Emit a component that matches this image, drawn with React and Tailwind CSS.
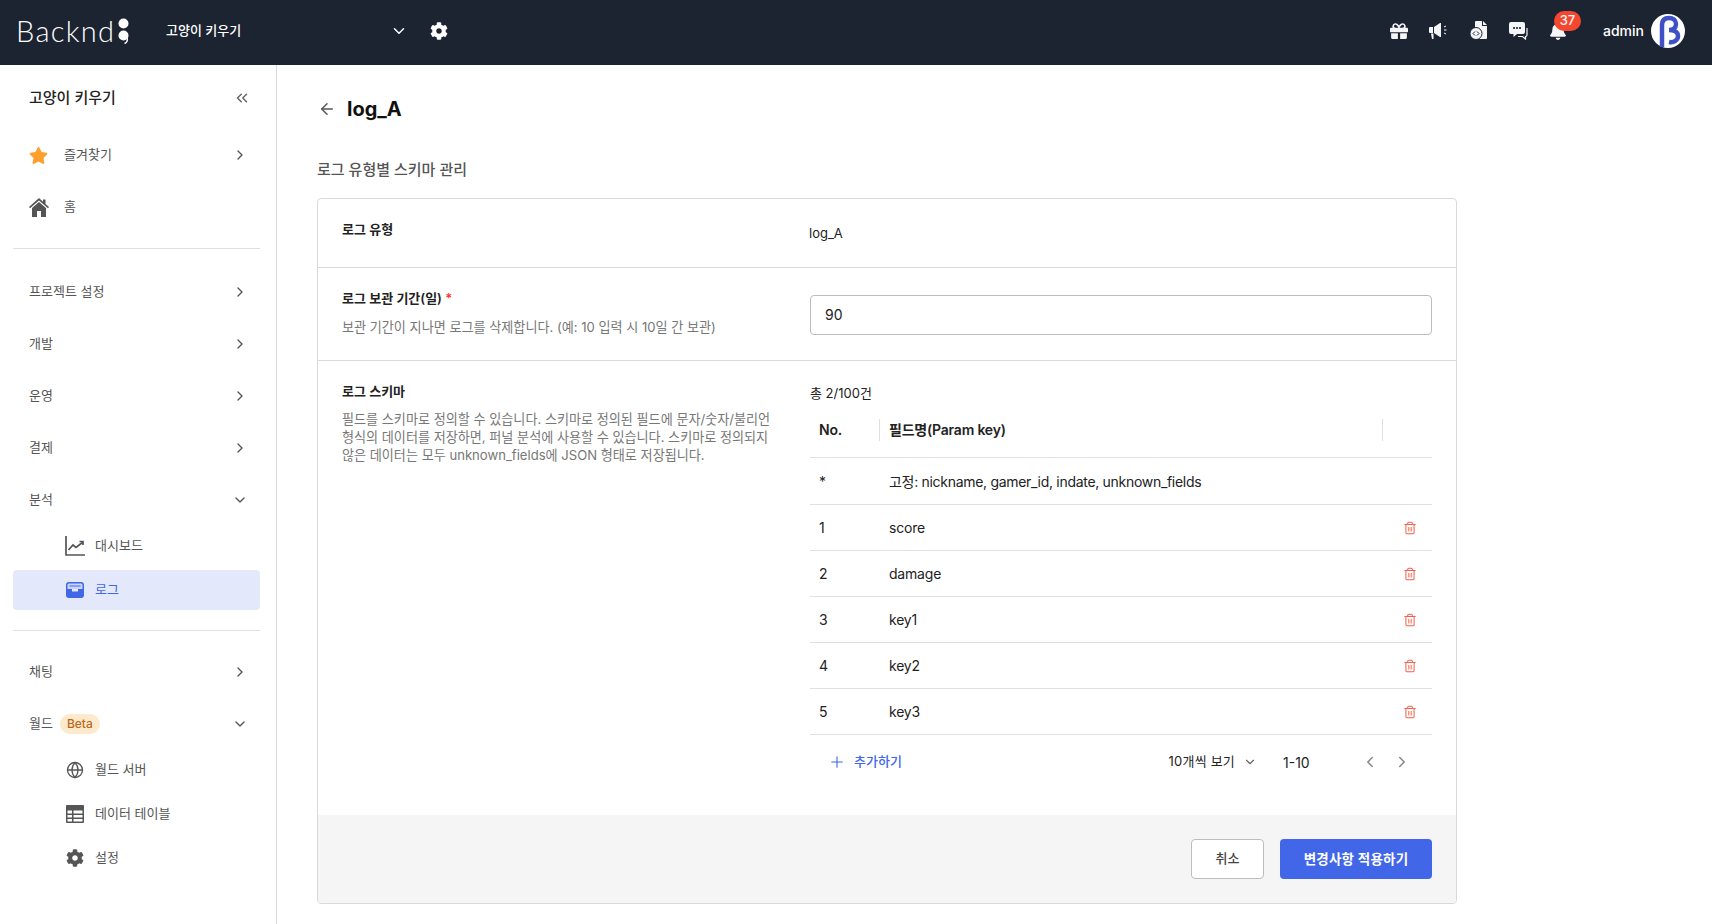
import { ChevronDown, ChevronRight, ChevronLeft, ChevronsLeft, ArrowLeft, Plus, Trash2, Globe } from 'lucide-react';
import { FaStar, FaGift, FaBell, FaCog } from 'react-icons/fa';

const font = { fontFamily: 'Inter, "Noto Sans CJK KR", sans-serif' };

function NavItem({ label, open, icon, badge, noArrow }) {
  return (
    <div className="h-[52px] flex items-center pl-[29px] pr-[28px] text-[13px] text-[#555]">
      {icon && <span className="w-[35px] flex items-center">{icon}</span>}
      <span className="pb-px">{label}</span>
      {badge && (
        <span className="ml-[7px] px-[7px] h-5 flex items-center rounded-full bg-[#fde9cc] text-[#b8691d] text-[12px] font-medium">{badge}</span>
      )}
      {!noArrow && (
        <span className="ml-auto">
          {open ? <ChevronDown className="w-4 h-4 text-[#555]" /> : <ChevronRight className="w-4 h-4 text-[#555]" />}
        </span>
      )}
    </div>
  );
}

function SubItem({ label, icon, active }) {
  return (
    <div className={`h-10 flex items-center ml-[13px] mr-4 pl-[52px] gap-[10px] text-[13px] rounded ${active ? 'bg-[#e3e9fb] text-[#4166e8]' : 'text-[#555]'}`}>
      <span className="w-5 flex justify-center">{icon}</span>
      <span className="pb-px">{label}</span>
    </div>
  );
}

function ChartIcon() {
  return (
    <svg width="20" height="20" viewBox="0 0 20 20" fill="none" stroke="#555" strokeWidth="1.7">
      <path d="M1 0v19h19" />
      <path d="M3.500 14l4.500-5 3 2.500L18 6" />
      <path d="M14.500 5.500H18V9" />
    </svg>
  );
}

function InboxIcon() {
  return (
    <svg width="18" height="16" viewBox="0 0 18 16">
      <path d="M3 0h12a3 3 0 0 1 3 3v10a3 3 0 0 1-3 3H3a3 3 0 0 1-3-3V3a3 3 0 0 1 3-3z" fill="#4166e8" />
      <path d="M3 1.500h12a1.500 1.500 0 0 1 1.500 1.500v4h-15V3A1.500 1.500 0 0 1 3 1.500z" fill="#c9d5fa" />
      <path d="M3.500 3.500h11v1h-11z" fill="#4166e8" />
      <path d="M6 7h6v2.500H6z" fill="#e3e9fb" />
    </svg>
  );
}

function HomeIcon() {
  return (
    <svg width="20" height="19" viewBox="0 0 20 19" fill="#555">
      <path d="M10 0L0 9l1 1.200L10 2.400l9 7.800 1-1.200-3.500-3.100V1.500h-2.500v2.200z" />
      <path d="M10 4L3 10v9h5v-6h4v6h5v-9z" />
    </svg>
  );
}

function TableIcon() {
  return (
    <svg width="18" height="18" viewBox="0 0 18 18">
      <path d="M0 1a1 1 0 0 1 1-1h16a1 1 0 0 1 1 1v16a1 1 0 0 1-1 1H1a1 1 0 0 1-1-1z" fill="#555" />
      <path d="M1.500 5.500h4.500v3h-4.500zM7.500 5.500h9v3h-9zM1.500 10h4.500v2.500h-4.500zM7.500 10h9v2.500h-9zM1.500 14h4.500v2.500h-4.500zM7.500 14h9v2.500h-9z" fill="#fff" />
    </svg>
  );
}

function MegaphoneIcon() {
  return (
    <svg width="20" height="18" viewBox="0 0 20 18" fill="#f4f5f7">
      <path d="M0 6a1 1 0 0 1 1-1h3v6H1a1 1 0 0 1-1-1z" />
      <path d="M5 5l6-4h1v14h-1l-6-4z" />
      <path d="M2 11.500h2.500V17H3z" />
      <path d="M15 5l2-1M15 8h2.500M15 11l2 1" stroke="#f4f5f7" strokeWidth="1" fill="none" />
    </svg>
  );
}

function FileCodeIcon() {
  return (
    <svg width="18" height="19" viewBox="0 0 18 19" fill="#f4f5f7">
      <path d="M5 1a1 1 0 0 1 1-1h6v5h5v12a1 1 0 0 1-1 1H6a1 1 0 0 1-1-1z" />
      <path d="M13 0l4 4h-4z" />
      <circle cx="6" cy="12.500" r="6" stroke="#1c2331" strokeWidth="1" />
      <path d="M5 10.500l-2 2 2 2M7 10.500l2 2-2 2" stroke="#1c2331" strokeWidth="1" fill="none" />
    </svg>
  );
}

function ChatIcon() {
  return (
    <svg width="19" height="18" viewBox="0 0 19 18" fill="#f4f5f7">
      <path d="M2 0h12a2 2 0 0 1 2 2v8a2 2 0 0 1-2 2H8l-3.500 3v-3H2a2 2 0 0 1-2-2V2a2 2 0 0 1 2-2z" />
      <circle cx="5" cy="6" r="1.100" fill="#1c2331" />
      <circle cx="8" cy="6" r="1.100" fill="#1c2331" />
      <circle cx="11" cy="6" r="1.100" fill="#1c2331" />
      <path d="M18 6v7a1.500 1.500 0 0 1-1.500 1.500V17l-3-2.500H9" fill="none" stroke="#f4f5f7" strokeWidth="1.200" />
    </svg>
  );
}

function Logo() {
  return (
    <div className="flex items-center w-[166px] pl-4">
      <span className="text-[29px] text-white tracking-[1.300px] leading-none" style={{ fontFamily: 'Lato, sans-serif', fontWeight: 300 }}>Backnd</span>
      <svg width="11" height="26" viewBox="0 0 11 26" className="ml-[3px]">
        <circle cx="5.500" cy="5.500" r="5" fill="#fff" />
        <circle cx="5.500" cy="17.500" r="5" fill="#fff" />
        <path d="M9 20c1 2.500-.5 5-2.500 5.500" stroke="#fff" strokeWidth="1.500" fill="none" />
      </svg>
    </div>
  );
}

function Avatar() {
  return (
    <svg width="34" height="34" viewBox="0 0 34 34">
      <circle cx="17" cy="17" r="17" fill="#fff" />
      <path d="M11 33V11c0-5 3-7 7-7s7 2 7 6-3 6-7 6c5 0 9 2 9 6s-4 7-9 6" fill="none" stroke="#3f51c4" strokeWidth="4.500" />
    </svg>
  );
}

const rows = ['score', 'damage', 'key1', 'key2', 'key3'];

export default function App() {
  return (
    <div className="h-screen overflow-hidden flex flex-col bg-white" style={font}>
      {/* Header */}
      <header className="h-[65px] shrink-0 bg-[#1c2331] flex items-center text-white pb-1">
        <Logo />
        <span className="w-[224px] text-[13px] font-medium">고양이 키우기</span>
        <ChevronDown className="w-[18px] h-[18px]" />
        <FaCog className="w-[18px] h-[18px] ml-[22px]" />
        <div className="ml-auto flex items-center">
          <div className="flex items-center gap-[21px] text-[#f4f5f7]">
            <FaGift className="w-[18px] h-[18px]" />
            <MegaphoneIcon />
            <FileCodeIcon />
            <ChatIcon />
            <div className="relative">
              <FaBell className="w-[18px] h-[18px]" />
              <span className="absolute -top-[11px] left-[5px] w-[27px] h-5 rounded-full bg-[#f4472f] text-[13px] font-medium flex items-center justify-center">37</span>
            </div>
          </div>
          <span className="ml-[36px] text-[14px] font-medium">admin</span>
          <span className="ml-[7px] mr-[27px]"><Avatar /></span>
        </div>
      </header>

      <div className="flex flex-1 min-h-0">
        {/* Sidebar */}
        <aside className="w-[277px] shrink-0 border-r border-[#d9d9d9]">
          <div className="h-[64px] flex items-center justify-between pl-[29px] pr-[25px] pt-[2px]">
            <span className="text-[15px] font-medium text-[#222]">고양이 키우기</span>
            <ChevronsLeft className="w-[18px] h-[18px] text-[#666]" />
          </div>
          <NavItem label="즐겨찾기" icon={<FaStar className="w-[19px] h-[19px] text-[#ff9f2d]" />} />
          <NavItem label="홈" noArrow icon={<HomeIcon />} />
          <div className="h-px bg-[#e0e0e0] ml-[13px] mr-4 mt-[15px] mb-[17px]" />
          <NavItem label="프로젝트 설정" />
          <NavItem label="개발" />
          <NavItem label="운영" />
          <NavItem label="결제" />
          <NavItem label="분석" open />
          <div className="flex flex-col gap-1">
            <SubItem label="대시보드" icon={<ChartIcon />} />
            <SubItem label="로그" icon={<InboxIcon />} active />
          </div>
          <div className="h-px bg-[#e0e0e0] ml-[13px] mr-4 mt-5 mb-[15px]" />
          <NavItem label="채팅" />
          <NavItem label="월드" open badge="Beta" />
          <div className="flex flex-col gap-1">
            <SubItem label="월드 서버" icon={<Globe className="w-[18px] h-[18px] text-[#555]" strokeWidth={1.75} />} />
            <SubItem label="데이터 테이블" icon={<TableIcon />} />
            <SubItem label="설정" icon={<FaCog className="w-[18px] h-[18px] text-[#555]" />} />
          </div>
        </aside>

        {/* Main */}
        <main className="flex-1 pl-10 pr-[255px]">
          <div className="flex items-center h-[30px] mt-[29px] pl-px">
            <ArrowLeft className="w-[18px] h-[18px] text-[#555]" />
            <h1 className="ml-[11px] text-[20px] font-bold text-[#111]">log_A</h1>
          </div>
          <h2 className="mt-[35px] text-[15px] font-medium text-[#555] leading-[22px]">로그 유형별 스키마 관리</h2>
          <div className="mt-[17px] border border-[#d9d9d9] rounded overflow-hidden">
            <div className="h-[69px] flex border-b border-[#d9d9d9] pl-6 pr-6">
              <div className="w-[467px] pt-[21px] text-[13px] font-semibold text-[#222]">로그 유형</div>
              <div className="pt-[25px] text-[13px] text-[#222]">log_A</div>
            </div>
            <div className="h-[93px] flex border-b border-[#d9d9d9] pl-6 pr-6">
              <div className="w-[468px] pt-[21px]">
                <div className="text-[13px] font-semibold text-[#222]">로그 보관 기간(일) <span className="text-[#f33]">*</span></div>
                <div className="mt-[9px] text-[13.100px] text-[#777]">보관 기간이 지나면 로그를 삭제합니다. (예: 10 입력 시 10일 간 보관)</div>
              </div>
              <div className="flex-1 pt-[27px]">
                <input readOnly value="90" className="w-full h-10 border border-[#bdbdbd] rounded px-[14px] pb-[2px] text-[14px] text-[#222] outline-none" />
              </div>
            </div>
            <div className="h-[454px] flex pl-6 pr-6">
              <div className="w-[468px] pt-[21px]">
                <div className="text-[13px] font-semibold text-[#222]">로그 스키마</div>
                <div className="mt-2 text-[13.100px] leading-[18.300px] text-[#777] whitespace-nowrap">
                  필드를 스키마로 정의할 수 있습니다. 스키마로 정의된 필드에 문자/숫자/불리언<br />
                  형식의 데이터를 저장하면, 퍼널 분석에 사용할 수 있습니다. 스키마로 정의되지<br />
                  않은 데이터는 모두 unknown_fields에 JSON 형태로 저장됩니다.
                </div>
              </div>
              <div className="flex-1 pt-[22px]">
                <div className="text-[13px] text-[#222] leading-5">총 2/100건</div>
                <div className="h-[55px] flex items-center border-b border-[#e0e0e0] text-[14px] font-semibold text-[#222] tracking-[-0.2px]">
                  <div className="w-[70px] h-[22px] pl-[9px] border-r border-[#e0e0e0]">No.</div>
                  <div className="w-[503px] h-[22px] pl-[9px] border-r border-[#e0e0e0]">필드명(Param key)</div>
                </div>
                <div className="h-[47px] flex items-center border-b border-[#e0e0e0] text-[14px] text-[#222] tracking-[-0.300px]">
                  <div className="w-[79px] pl-[9px]">*</div>
                  <div>고정: nickname, gamer_id, indate, unknown_fields</div>
                </div>
                {rows.map((r, i) => (
                  <div key={r} className="h-[46px] flex items-center border-b border-[#e0e0e0] text-[14px] text-[#222] tracking-[-0.200px]">
                    <div className="w-[79px] pl-[9px]">{i + 1}</div>
                    <div>{r}</div>
                    <Trash2 className="ml-auto mr-[15px] w-[14px] h-[14px] text-[#f4604c]" strokeWidth={1.75} />
                  </div>
                ))}
                <div className="h-[54px] flex items-center text-[13px] text-[#222]">
                  <Plus className="ml-[18px] w-[18px] h-[18px] text-[#4166e8]" strokeWidth={1.5} />
                  <span className="ml-[8px] font-medium text-[#4166e8]">추가하기</span>
                  <span className="ml-auto tracking-[0.200px]">10개씩 보기</span>
                  <ChevronDown className="ml-2 w-[14px] h-[14px] text-[#666]" />
                  <span className="ml-[26px] w-[78px] text-[14px]">1-10</span>
                  <ChevronLeft className="w-[18px] h-[18px] text-[#888]" />
                  <ChevronRight className="ml-[14px] mr-[21px] w-[18px] h-[18px] text-[#888]" />
                </div>
              </div>
            </div>
            <div className="h-[88px] bg-[#f5f5f5] flex items-center justify-end gap-4 pr-6">
              <button className="w-[73px] h-10 bg-white border border-[#bdbdbd] rounded text-[13px] font-medium text-[#444]">취소</button>
              <button className="w-[152px] h-10 bg-[#4166e8] rounded text-[13.500px] tracking-[0.200px] font-semibold text-white">변경사항 적용하기</button>
            </div>
          </div>
        </main>
      </div>
    </div>
  );
}
